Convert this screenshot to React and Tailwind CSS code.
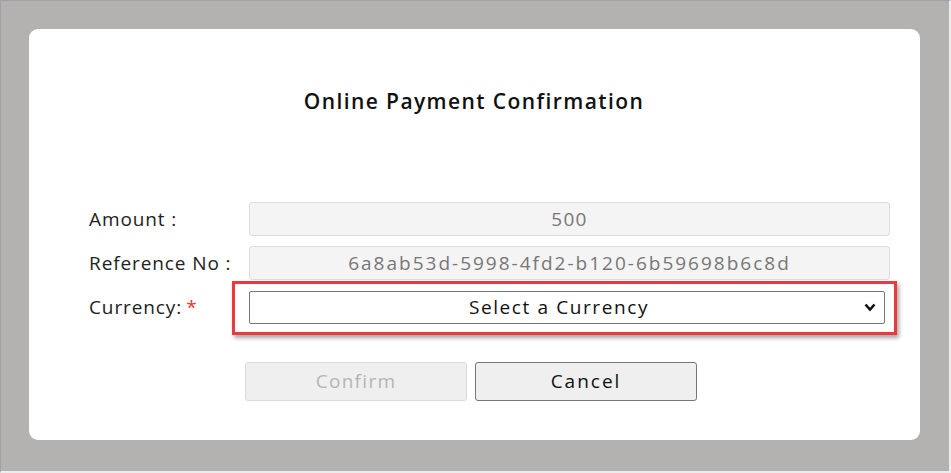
import { useState } from 'react';

const font = { fontFamily: '"Open Sans", "Noto Sans", Arial, sans-serif' };

function Field({ label, required, children }) {
  return (
    <div className="flex items-center">
      <div className="w-[160px] shrink-0 text-[19px] text-[#222] tracking-[0.9px]">
        {label}
        {required && <span className="ml-[4px] text-[#e53935]">*</span>}
      </div>
      {children}
    </div>
  );
}

export default function App() {
  const [currency, setCurrency] = useState('');

  return (
    <div style={font}
      className="w-[951px] h-[473px] bg-[#b3b2b0] border-t border-l border-[#9ea2a8] border-r-[2px] border-r-[#ececec] border-b-[2px] border-b-[#ececec] pl-[28px] pt-[28px]">
      <div className="w-[891px] h-[411px] bg-white rounded-[9px] pt-[57px] pl-[60px] pr-[30px]">
        <h1 className="text-center pr-[31px] text-[21px] font-semibold text-[#111] tracking-[1.4px] leading-[30px]">
          Online Payment Confirmation
        </h1>

        <div className="mt-[86px] flex flex-col gap-[10px]">
          <Field label="Amount :">
            <div className="flex-1 h-[34px] bg-[#f4f4f4] border border-[#dcdcdc] rounded-[3px] flex items-center justify-center text-[19px] text-[#777] tracking-[1.3px]">
              500
            </div>
          </Field>
          <Field label="Reference No :">
            <div className="flex-1 h-[34px] bg-[#f4f4f4] border border-[#dcdcdc] rounded-[3px] flex items-center justify-center text-[19px] text-[#777] tracking-[2px]">
              6a8ab53d-5998-4fd2-b120-6b59698b6c8d
            </div>
          </Field>
          <Field label="Currency:" required>
            <div className="relative flex-1 mr-[5px] mt-[1px]">
              <div className="absolute -left-[17px] -top-[10px] -right-[12px] -bottom-[11px] border-[3px] border-[#ea3a3d] shadow-[2px_3px_4px_rgba(0,0,0,0.35)]" />
              <select value={currency} onChange={e => setCurrency(e.target.value)}
                className="relative w-full h-[33px] appearance-none bg-white border border-[#767676] rounded-[2px] pr-[16px] text-center text-[19px] text-[#111] tracking-[1.6px] outline-none">
                <option value="">Select a Currency</option>
                <option value="USD">USD</option>
                <option value="EUR">EUR</option>
              </select>
              <svg className="absolute right-[9px] top-[12px] pointer-events-none" width="12" height="9" viewBox="0 0 12 9">
                <path d="M1.5 1.5 L6 6.5 L10.5 1.5" fill="none" stroke="#111" strokeWidth="2.6" />
              </svg>
            </div>
          </Field>
        </div>

        <div className="mt-[38px] ml-[156px] flex gap-[8px]">
          <button disabled
            className="w-[222px] h-[39px] bg-[#efefef] border border-[#dadada] rounded-[3px] text-[19px] text-[#b5b5b5] tracking-[1.3px]">
            Confirm
          </button>
          <button
            className="w-[222px] h-[39px] bg-[#efefef] border border-[#767676] rounded-[3px] text-[19px] text-[#111] tracking-[2px]">
            Cancel
          </button>
        </div>
      </div>
    </div>
  );
}
